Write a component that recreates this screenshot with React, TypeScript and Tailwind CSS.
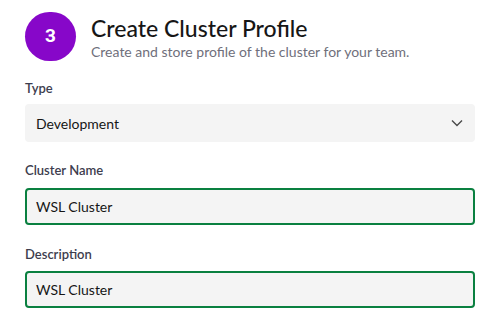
import React from "react";

export default function App() {
  return (
    <div className="w-[504px] h-[327px] bg-white px-[25px] pt-[12px]" style={{ fontFamily: "Lato, 'Noto Sans', sans-serif" }}>
      <div className="flex items-start gap-[15px]">
        <div className="w-[51px] h-[49px] rounded-full bg-[#8707c9] flex items-center justify-center text-white text-[19px] font-bold" style={{ fontFamily: "Roboto, sans-serif" }}>
          3
        </div>
        <div className="flex flex-col pt-[2px]">
          <div className="text-[23px] leading-[29px] font-medium text-[#161616]">Create Cluster Profile</div>
          <div className="text-[14px] leading-[18px] text-[#6f6f7b]">Create and store profile of the cluster for your team.</div>
        </div>
      </div>

      <div className="mt-[19px] text-[13px] leading-[16px] font-semibold text-[#3d3d4e]">Type</div>
      <div className="mt-[8px] h-[38px] w-[450px] rounded-[4px] bg-[#f4f4f4] flex items-center justify-between pl-[11px] pr-[12px]">
        <span className="text-[14px] text-[#161616]">Development</span>
        <svg width="12" height="8" viewBox="0 0 12 8" fill="none">
          <path d="M1 1.5 L6 6.5 L11 1.5" stroke="#4a4a4a" strokeWidth="1.4" />
        </svg>
      </div>

      <div className="mt-[20px] text-[13px] leading-[16px] font-semibold text-[#3d3d4e]">Cluster Name</div>
      <div className="mt-[10px] h-[37px] w-[450px] rounded-[4px] bg-[#f4f4f4] border-2 border-[#0a8040] flex items-center pl-[9px]">
        <span className="text-[14px] text-[#161616]">WSL Cluster</span>
      </div>

      <div className="mt-[21px] text-[13px] leading-[16px] font-semibold text-[#3d3d4e]">Description</div>
      <div className="mt-[9px] h-[37px] w-[450px] rounded-[4px] bg-[#f4f4f4] border-2 border-[#0a8040] flex items-center pl-[9px]">
        <span className="text-[14px] text-[#161616]">WSL Cluster</span>
      </div>
    </div>
  );
}
